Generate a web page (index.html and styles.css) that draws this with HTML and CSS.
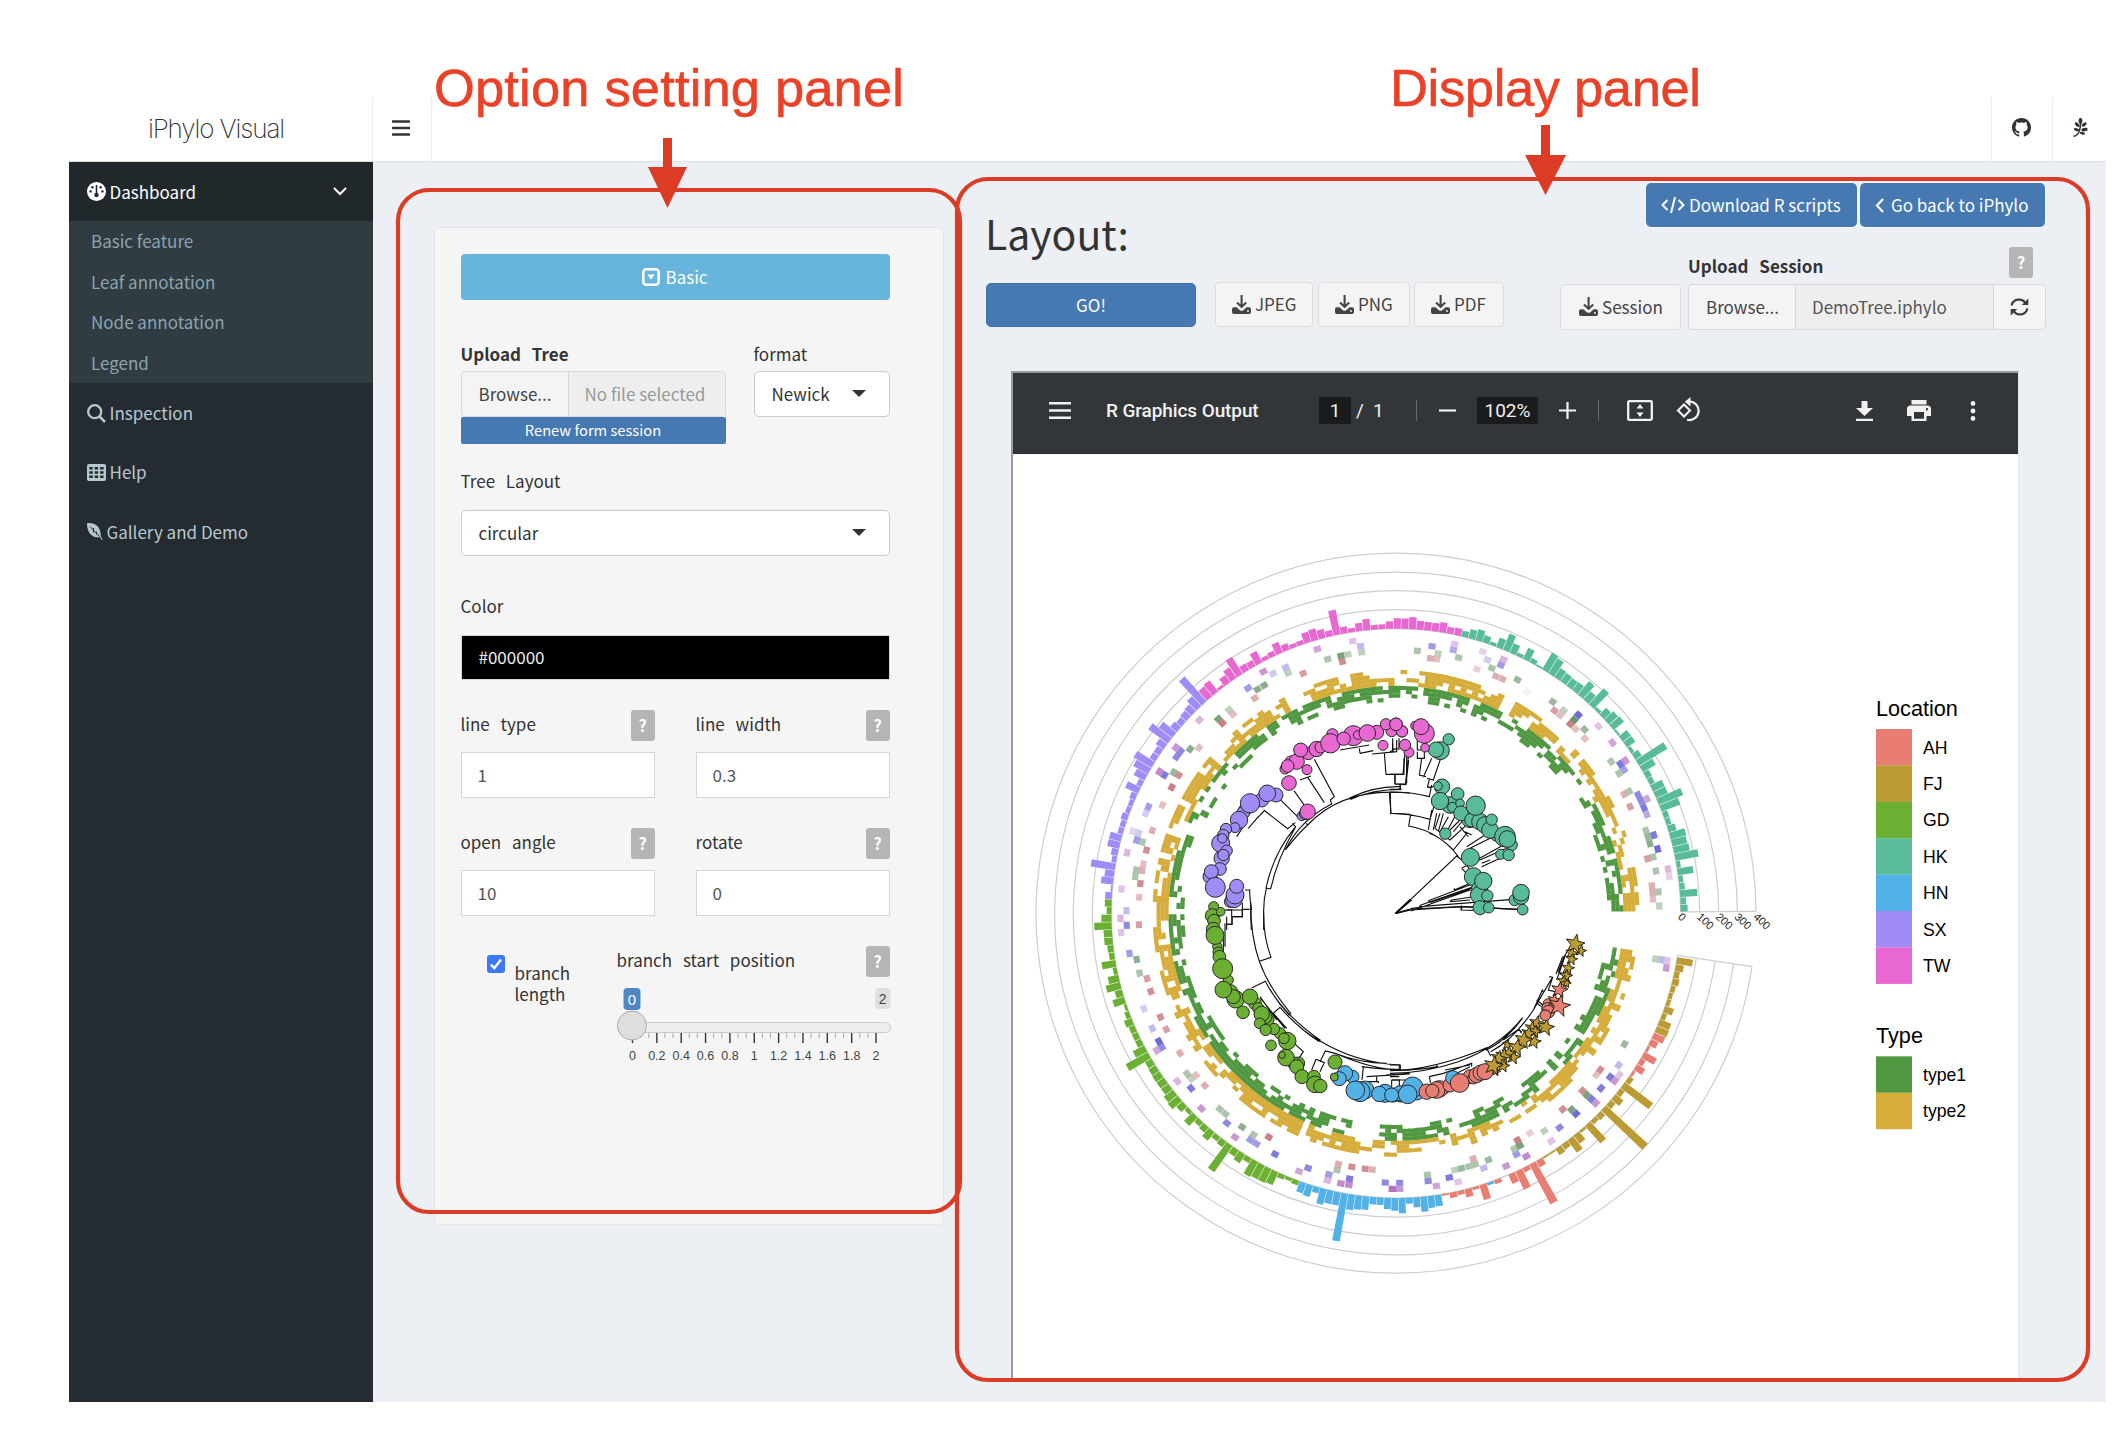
FILE: index.html
```html
<!DOCTYPE html>
<html lang="en">
<head>
<meta charset="utf-8">
<title>iPhylo Visual</title>
<link rel="stylesheet" href="styles.css">
</head>
<body>
<svg class="sprite" aria-hidden="true">
  <symbol id="i-download" viewBox="0 0 20 20"><path d="M9 0h2.200v10l3-2.900 1.500 1.500-5.600 5.300-5.600-5.300L6 7.100l3 2.900z"/><path d="M2 13h2.700l3.600 3c1 .9 2.600.9 3.600 0l3.600-3H18a2 2 0 0 1 2 2V18a2 2 0 0 1-2 2H2a2 2 0 0 1-2-2v-3a2 2 0 0 1 2-2zm14.800 2.800a1 1 0 1 0 0 2 1 1 0 0 0 0-2z"/></symbol>
</svg>

<div class="app">
  <header class="topbar">
    <div class="logo">iPhylo Visual</div>
    <button class="nav-toggle"><svg width="18" height="16" viewBox="0 0 18 16"><path d="M1 1.500h16M1 8h16M1 14.500h16" stroke="#333" stroke-width="2.600" stroke-linecap="round"/></svg></button>
    <div class="nav-links">
      <a class="nav-link github"><svg width="19" height="19" viewBox="0 0 16 16"><path fill="#2d3236" d="M8 0C3.580 0 0 3.580 0 8c0 3.540 2.290 6.530 5.470 7.590.4.070.55-.17.55-.38 0-.19-.01-.82-.01-1.490-2.010.37-2.530-.49-2.690-.94-.09-.23-.48-.94-.82-1.130-.28-.15-.68-.52-.01-.53.63-.01 1.080.58 1.230.82.72 1.210 1.870.87 2.330.66.07-.52.28-.87.51-1.070-1.780-.2-3.640-.89-3.640-3.950 0-.87.31-1.590.82-2.150-.08-.2-.36-1.020.08-2.120 0 0 .67-.21 2.200.82.64-.18 1.320-.27 2-.27s1.360.09 2 .27c1.530-1.040 2.200-.82 2.200-.82.44 1.100.16 1.920.08 2.120.51.56.82 1.270.82 2.150 0 3.070-1.870 3.750-3.650 3.950.29.25.54.73.54 1.480 0 1.070-.01 1.930-.01 2.200 0 .21.15.46.55.38A8 8 0 0 0 16 8c0-4.420-3.580-8-8-8z"/></svg></a>
      <a class="nav-link"><svg width="15" height="19" viewBox="0 0 15 19"><path d="M.5 18.300C4.500 18 7.500 13 7.800 3" stroke="#2d3236" stroke-width="1.500" fill="none"/><g fill="#2d3236"><ellipse cx="7.500" cy="2.800" rx="1.900" ry="2.900"/><ellipse cx="4.300" cy="6.700" rx="1.600" ry="2.900" transform="rotate(-50 4.300 6.700)"/><ellipse cx="11.200" cy="6.500" rx="1.600" ry="2.900" transform="rotate(50 11.200 6.500)"/><ellipse cx="3.500" cy="11.600" rx="1.500" ry="2.900" transform="rotate(-75 3.500 11.600)"/><ellipse cx="11.500" cy="11.600" rx="1.700" ry="3.200" transform="rotate(80 11.500 11.600)"/><ellipse cx="9.300" cy="15.300" rx="1.300" ry="2.800" transform="rotate(105 9.300 15.300)"/></g></svg></a>
    </div>
  </header>

  <div class="body">
    <nav class="sidebar">
      <a class="side-item active">
        <svg width="19" height="19" viewBox="0 0 19 19"><circle cx="9.500" cy="9.500" r="9.500" fill="#fff"/><path d="M9.500 3v9" stroke="#1e282c" stroke-width="1.600"/><g fill="#1e282c"><circle cx="9.500" cy="13" r="2.200"/><circle cx="5.400" cy="5.200" r="1.200"/><circle cx="13.600" cy="5.200" r="1.200"/><circle cx="3.600" cy="9.400" r="1.200"/><circle cx="15.400" cy="9.400" r="1.200"/></g></svg>
        <span>Dashboard</span>
        <svg class="chev" width="14" height="9" viewBox="0 0 14 9"><path d="M1 1l6 6 6-6" fill="none" stroke="#fff" stroke-width="2"/></svg>
      </a>
      <div class="submenu">
        <a>Basic feature</a><a>Leaf annotation</a><a>Node annotation</a><a>Legend</a>
      </div>
      <a class="side-item"><svg width="19" height="19" viewBox="0 0 19 19"><circle cx="7.700" cy="7.700" r="6.500" fill="none" stroke="#b8c7ce" stroke-width="2.300"/><path d="M12.500 12.500l5.500 5.500" stroke="#b8c7ce" stroke-width="2.500"/></svg><span>Inspection</span></a>
      <a class="side-item"><svg width="19" height="17" viewBox="0 0 19 17"><rect width="19" height="17" rx="2" fill="#b8c7ce"/><g fill="#222d32"><path d="M2.300 3h3.500v2.600H2.300zM7.700 3h3.500v2.600H7.700zM13.100 3h3.500v2.600h-3.500zM2.300 7.200h3.500v2.600H2.300zM7.700 7.200h3.500v2.600H7.700zM13.100 7.200h3.500v2.600h-3.500zM2.300 11.500h3.500v2.600H2.300zM7.700 11.500h3.500v2.600H7.700zM13.100 11.500h3.500v2.600h-3.500z"/></g></svg><span>Help</span></a>
      <a class="side-item gallery"><svg width="16" height="17" viewBox="0 0 16 17"><path d="M0 0c8-.3 14 3 13.700 13.500l2 3-.8.4-2-2.600C5 15 0 10 0 0z" fill="#b8c7ce"/><path d="M3 3.500l9.500 10M6.500 5v4.500M9.500 8.500v3" stroke="#222d32" stroke-width="1" fill="none"/></svg><span>Gallery and Demo</span></a>
    </nav>

    <main class="content">
      <section class="well">
        <button class="btn-basic"><svg width="18" height="18" viewBox="0 0 18 18"><rect x="1.300" y="1.300" width="15.400" height="15.400" rx="3" fill="none" stroke="#fff" stroke-width="2.500"/><path d="M5.300 6.500h7.400L9 11.800z" fill="#fff"/></svg>Basic</button>

        <div class="upload-row">
          <div class="upload">
            <label class="lbl bold">Upload Tree</label>
            <div class="file-group"><span class="browse">Browse...</span><span class="file-name muted">No file selected</span></div>
            <button class="btn-renew">Renew form session</button>
          </div>
          <div class="format">
            <label class="lbl">format</label>
            <div class="select">Newick<i class="caret"></i></div>
          </div>
        </div>

        <label class="lbl l-layout">Tree Layout</label>
        <div class="select s-layout">circular<i class="caret"></i></div>
        <label class="lbl l-color">Color</label>
        <div class="color-input">#000000</div>

        <div class="fields">
          <div class="field"><div class="field-head"><label class="lbl">line type</label><b class="help">?</b></div><div class="input">1</div></div>
          <div class="field"><div class="field-head"><label class="lbl">line width</label><b class="help">?</b></div><div class="input">0.3</div></div>
          <div class="field"><div class="field-head"><label class="lbl">open angle</label><b class="help">?</b></div><div class="input">10</div></div>
          <div class="field"><div class="field-head"><label class="lbl">rotate</label><b class="help">?</b></div><div class="input">0</div></div>
        </div>

        <div class="branch-row">
          <div class="check">
            <svg width="18" height="18" viewBox="0 0 18 18"><rect width="18" height="18" rx="3" fill="#3b78f5"/><path d="M3.800 9.500l3.500 3.700L14 4.500" fill="none" stroke="#fff" stroke-width="2.500"/></svg>
            <span>branch<br>length</span>
          </div>
          <div class="start">
            <div class="field-head"><label class="lbl">branch start position</label><b class="help">?</b></div>
            <svg id="slider" class="slider" width="274" height="76" viewBox="617 987 274 76"></svg>
          </div>
        </div>
      </section>

      <section class="display">
        <div class="display-top">
          <div class="top-left">
            <h2>Layout:</h2>
            <div class="export">
              <button class="btn-go">GO!</button>
              <button class="btn jpeg"><svg class="dl"><use href="#i-download"/></svg>JPEG</button>
              <button class="btn png"><svg class="dl"><use href="#i-download"/></svg>PNG</button>
              <button class="btn pdfb"><svg class="dl"><use href="#i-download"/></svg>PDF</button>
            </div>
          </div>
          <div class="top-right">
            <div class="links">
              <button class="btn-blue scripts"><svg width="24" height="18" viewBox="0 0 24 18"><path d="M6.500 4L1.500 9l5 5M17.500 4l5 5-5 5M14 1L10 17" fill="none" stroke="#fff" stroke-width="2"/></svg>Download R scripts</button>
              <button class="btn-blue back"><svg width="9" height="15" viewBox="0 0 9 15"><path d="M8 1L2 7.500 8 14" fill="none" stroke="#fff" stroke-width="2.200"/></svg>Go back to iPhylo</button>
            </div>
            <div class="session-head"><label class="lbl bold">Upload Session</label><b class="help">?</b></div>
            <div class="session">
              <button class="btn sess"><svg class="dl"><use href="#i-download"/></svg>Session</button>
              <div class="file-group"><span class="browse">Browse...</span><span class="file-name">DemoTree.iphylo</span><span class="refresh"><svg width="19" height="18" viewBox="0 0 19 18"><g fill="none" stroke="#3c3c3c" stroke-width="2.200"><path d="M1.600 7.500A7.600 7.600 0 0 1 15.500 5.200"/><path d="M17.400 10.500A7.600 7.600 0 0 1 3.500 12.800"/></g><path d="M18.300.5v6.500h-6.500zM.7 17.500v-6.500h6.500z" fill="#3c3c3c"/></svg></span></div>
            </div>
          </div>
        </div>

        <div class="viewer">
          <div class="toolbar">
            <svg class="t-menu" width="22" height="17" viewBox="0 0 22 17"><path d="M0 1.200h22M0 8.500h22M0 15.800h22" stroke="#f1f1f1" stroke-width="2.400"/></svg>
            <b class="t-title">R Graphics Output</b>
            <span class="t-box t-page">1</span><span class="t-slash">/</span><span class="t-total">1</span>
            <i class="t-sep"></i>
            <svg class="t-minus" width="17" height="17" viewBox="0 0 17 17"><path d="M0 8.500h17" stroke="#f1f1f1" stroke-width="2.200"/></svg>
            <span class="t-box t-zoom">102%</span>
            <svg class="t-plus" width="17" height="17" viewBox="0 0 17 17"><path d="M0 8.500h17M8.500 0v17" stroke="#f1f1f1" stroke-width="2.200"/></svg>
            <i class="t-sep s2"></i>
            <svg class="t-fit" width="26" height="21" viewBox="0 0 26 21"><rect x="1.200" y="1.200" width="23.600" height="18.600" rx="1" fill="none" stroke="#f1f1f1" stroke-width="2.300"/><path d="M13 4l3.500 4.500h-7zM13 17l3.500-4.500h-7z" fill="#f1f1f1"/></svg>
            <svg class="t-rot" width="25" height="25" viewBox="0 0 25 25"><path d="M8 7.500l6 6-6 6-6-6z" fill="none" stroke="#f1f1f1" stroke-width="2.100"/><path d="M13 4.500a9.300 9.300 0 1 1-2 18.300" fill="none" stroke="#f1f1f1" stroke-width="2.200"/><path d="M14.500 0v9.500L8.800 4.700z" fill="#f1f1f1"/></svg>
            <svg class="t-dl" width="17" height="20" viewBox="0 0 17 20"><path d="M5.500 0h6v7H17l-8.500 8L0 7h5.500zM0 17.700h17V20H0z" fill="#f1f1f1"/></svg>
            <svg class="t-print" width="24" height="21" viewBox="0 0 24 21"><path d="M4.500 0h15v4.500h-15zM3.500 5.500h17A3.500 3.500 0 0 1 24 9v7h-4.500v5h-15v-5H0V9a3.500 3.500 0 0 1 3.500-3.500zM7 12v6.800h10V12zm13-4a1.200 1.200 0 1 0 0 2.400A1.200 1.200 0 0 0 20 8z" fill="#f1f1f1" fill-rule="evenodd"/></svg>
            <svg class="t-dots" width="6" height="20" viewBox="0 0 6 20"><g fill="#f1f1f1"><circle cx="3" cy="2.500" r="2.400"/><circle cx="3" cy="10" r="2.400"/><circle cx="3" cy="17.500" r="2.400"/></g></svg>
          </div>
          <div class="page">
            <svg id="tree" width="1005" height="924" viewBox="9 -228 3015 2772"></svg>
          </div>
        </div>
      </section>
    </main>
  </div>
</div>

<svg class="callouts" width="2120" height="1456" viewBox="0 0 2120 1456">
  <g fill="none" stroke="#dc3b26" stroke-width="4.200"><rect x="398" y="190" width="562" height="1022" rx="31"/><rect x="957" y="179" width="1131" height="1201" rx="31"/></g>
  <path d="M663 138h9v29h15l-19.500 41L648 167h15zM1541 125h9v30h16l-20.500 40L1525 155h16z" fill="#dc3b26"/>
  <g class="callout-text"><text x="434" y="106" textLength="470">Option setting panel</text><text x="1390" y="106" textLength="311">Display panel</text></g>
</svg>
<script src="chart.js"></script>
</body>
</html>
```
FILE: styles.css
```css
* { box-sizing: border-box; }
body {
  margin: 0;
  width: 2120px;
  height: 1456px;
  overflow: hidden;
  background: #fff;
  color: #333;
  font: 17px/24px "Noto Sans CJK SC", "Open Sans", sans-serif;
}
button { font: inherit; color: inherit; margin: 0; padding: 0; border: 0; background: none; }
svg { display: block; flex: none; }
.sprite { position: absolute; width: 0; height: 0; }

.app { width: 2037px; margin: 97px 0 0 69px; height: 1305px; }

.topbar { display: flex; height: 65px; border-bottom: 1px solid #dfe3e8; }
.logo {
  width: 304px; padding: 1px 9px 0 0; text-align: center;
  font: 200 26px/62px Inter, "Liberation Sans", sans-serif;
  letter-spacing: -1.100px; border-right: 1px solid #eee;
}
.nav-toggle { display: flex; align-items: flex-start; width: 59px; padding: 23px 0 0 19px; border-right: 1px solid #eee; }
.nav-links { margin-left: auto; display: flex; }
.nav-link { width: 54px; border-left: 1px solid #eee; padding: 21px 0 0 20px; }
.nav-link.github { width: 61px; }

.body { display: flex; height: 1240px; }
.sidebar { width: 304px; background: #242c32; color: #b8c7ce; }
.side-item { display: flex; align-items: center; height: 59.400px; padding: 0 26px 0 17.500px; gap: 4px; }
.side-item.active { background: #20282b; color: #fff; }
.chev { margin-left: auto; }
.submenu { background: #303b42; color: #8aa4af; padding: 0 0 0 22px; height: 162px; }
.submenu a { display: block; height: 40.400px; line-height: 40px; }

.content { flex: 1; display: flex; background: #ecf0f5; }
.well {
  width: 510px; height: 998px; margin: 65px 0 0 61px; padding: 26px 51px 0 25px;
  background: #f5f5f5; border: 1px solid #e3e5e8; border-radius: 5px;
}
.btn-basic {
  display: flex; justify-content: center; align-items: center; gap: 5px;
  width: 429px; height: 46px; border-radius: 4px; background: #67b4dc; color: #fff;
}
.well > * { position: static; margin-left: .5px; }
.lbl { display: block; word-spacing: 7px; white-space: nowrap; }
.bold { font-weight: 700; }
.upload-row { display: flex; justify-content: space-between; width: 429px; margin-top: 42px; }
.upload { width: 265px; }
.format { width: 136px; }
.upload .lbl, .format .lbl { height: 29px; }
.file-group { display: flex; height: 46px; line-height: 43px; border: 1px solid #d6d9e0; border-radius: 4px; color: #444; background: #f4f4f4; }
.browse { width: 106px; padding-left: 17px; }
.file-name { flex: 1; padding-left: 16px; background: #eee; border-left: 1px solid #d2d6de; color: #555; }
.muted { color: #999; }
.btn-renew { display: block; width: 265px; height: 27px; background: #4678b2; color: #fff; font-size: 14.700px; line-height: 24px; padding-bottom: 2px; border-radius: 2px; }
.select {
  display: flex; align-items: center; justify-content: space-between;
  height: 46px; padding: 0 23px 1px 17px; background: #fff; border: 1px solid #ccc; border-radius: 5px;
}
.caret { border: 7px solid transparent; border-top-color: #333; border-bottom: 0; margin-top: -1px; }
.l-layout { margin-top: 25px; }
.s-layout { margin-top: 17px; }
.l-color { margin-top: 38px; }
.s-layout, .color-input { width: 429px; }
.color-input { margin-top: 17px; height: 45px; padding-left: 17px; line-height: 42px; background: #000; color: #eee; border: 1px solid #d2d6de; }
.fields { display: grid; grid-template-columns: 194px 194px; column-gap: 41px; row-gap: 30px; margin-top: 30px; width: 429px; }
.field-head { display: flex; justify-content: space-between; height: 31px; }
.field-head .lbl { padding-top: 2px; }
.help { width: 24px; height: 31px; border-radius: 3px; background: #b5b5b5; color: #fff; text-align: center; line-height: 30px; font-size: 16px; }
.input { height: 46px; margin-top: 11px; padding-left: 16px; line-height: 43px; background: #fff; border: 1px solid #d2d6de; color: #555; }
.branch-row { display: flex; justify-content: space-between; width: 429px; margin-top: 30px; }
.check { display: flex; gap: 10px; padding: 9px 0 0 26px; }
.check span { line-height: 21px; padding-top: 7px; }
.start { width: 273px; }
.slider { margin-top: 10px; font: 12.500px "Liberation Sans", sans-serif; overflow: visible; }

.display { width: 1059px; margin-left: 42px; }
.display-top { display: flex; justify-content: space-between; height: 208px; }
h2 { margin: 43px 0 0 -1px; font-size: 41px; font-weight: 400; line-height: 54px; height: 77px; }
.export { display: flex; align-items: center; height: 45px; }
.btn-go { width: 210px; height: 44px; border-radius: 5px; background: #4678b2; border: 1px solid #3f6ea6; color: #fff; line-height: 40px; margin-right: 19px; }
.btn { display: flex; align-items: center; height: 45px; padding: 0 0 1px 16px; gap: 4px; background: #f4f4f4; border: 1px solid #ddd; border-radius: 4px; color: #444; }
.dl { width: 19px; height: 19px; fill: #444; }
.jpeg { width: 98px; margin-right: 5px; }
.png { width: 92px; margin-right: 4px; }
.pdfb { width: 90px; }
.links { display: flex; justify-content: flex-end; gap: 3px; margin-top: 21px; }
.btn-blue { display: flex; align-items: center; height: 44px; padding-left: 15px; background: #4678b2; color: #fff; border-radius: 5px; box-shadow: 0 0 0 1px #f4f7fb; }
.scripts { width: 211px; gap: 4px; }
.back { width: 185px; gap: 7px; }
.session-head { display: flex; justify-content: space-between; height: 31px; margin: 20px 12px 0 129px; }
.session-head .lbl { padding-top: 7px; }
.session { display: flex; margin: 6px -1px 0 1px; gap: 7px; }
.sess { width: 121px; height: 46px; padding-left: 18px; }
.session .file-group { width: 358px; }
.session .file-name { flex: none; width: 198px; }
.refresh { flex: 1; border-left: 1px solid #d2d6de; padding: 13px 0 0 16px; }

.viewer { width: 1008px; height: 1008px; margin-left: 25px; border: 2px solid #999b9d; border-right: 1px solid #e4e6e8; border-bottom: 0; margin-top: 1px; }
.toolbar { display: flex; align-items: center; height: 81px; padding-bottom: 5px; background: #323639; color: #f1f1f1; font: 500 19px/27px Roboto, sans-serif; border-bottom: 1px solid #27292b; }
.t-menu { margin-left: 36px; }
.t-title { margin-left: 35px; width: 213px; font-weight: 500; letter-spacing: -.1px; white-space: nowrap; }
.t-box { height: 27px; background: #191b1c; text-align: center; font-weight: 400; }
.t-page { width: 32px; }
.t-slash { width: 22px; padding-left: 5px; font-weight: 400; }
.t-total { width: 43px; font-weight: 400; }
.t-sep { width: 1px; height: 21px; background: #66696b; }
.t-minus { margin-left: 22px; }
.t-zoom { width: 61px; margin-left: 21px; }
.t-plus { margin-left: 21px; }
.s2 { margin-left: 22px; }
.t-fit { margin-left: 28px; }
.t-rot { margin-left: 23px; margin-top: -2px; }
.t-dl { margin-left: 155px; }
.t-print { margin-left: 34px; }
.t-dots { margin-left: 39px; }
.page { background: #fff; height: 925px; font-family: "Liberation Sans", sans-serif; }

.callouts { position: absolute; left: 0; top: 0; pointer-events: none; }
.callout-text { font: 52.500px "Liberation Sans", sans-serif; fill: #eb4127; stroke: #eb4127; stroke-width: .6px; }
```
FILE: chart.js
```js
const NS = 'http://www.w3.org/2000/svg';
function add(parent, tag, attrs, text) {
  const e = document.createElementNS(NS, tag);
  for (const k in attrs) e.setAttribute(k, attrs[k]);
  if (text !== undefined) e.textContent = text;
  parent.appendChild(e);
  return e;
}

/* ---------- slider ---------- */
const sl = document.getElementById('slider');
add(sl, 'rect', { x: 617.5, y: 1022.5, width: 273, height: 10, rx: 5, fill: '#eee', stroke: '#ccc' });
for (let i = 0; i <= 30; i++) {
  const x = 632.5 + i * 8.117, major = i % 3 === 0;
  add(sl, 'path', { d: `M${x} 1033v${major ? 10 : 5}`, stroke: major ? '#333' : '#aaa', 'stroke-width': major ? 1.4 : 1 });
  if (major) add(sl, 'text', { x, y: 1060, 'text-anchor': 'middle', fill: '#444' }, String(+(i / 15).toFixed(1)));
}
add(sl, 'circle', { cx: 632, cy: 1025.500, r: 14.500, fill: '#dedede', stroke: '#ababab' });
add(sl, 'rect', { x: 623.500, y: 988, width: 17, height: 22, rx: 4, fill: '#4f87c6' });
add(sl, 'text', { x: 632, y: 1005, 'text-anchor': 'middle', fill: '#fff', 'font-size': 15 }, '0');
add(sl, 'rect', { x: 875, y: 988, width: 15.500, height: 21, rx: 4, fill: '#dfdfdf' });
add(sl, 'text', { x: 882.700, y: 1004, 'text-anchor': 'middle', fill: '#444', 'font-size': 14 }, '2');

/* ---------- circular tree ---------- */
const tree = document.getElementById('tree');
const CX = 1158, CY = 1150;
const C = { AH: '#e87e72', FJ: '#bb9b33', GD: '#6cb033', HK: '#58bc98', HN: '#52b1e6', SX: '#a18bf7', TW: '#e868d2', t1: '#519843', t2: '#d6ad3b' };
const pt = (r, deg) => {
  const a = deg * Math.PI / 180;
  return [(CX + r * Math.cos(a)).toFixed(1), (CY - r * Math.sin(a)).toFixed(1)];
};
const cell = (r0, r1, a0, a1) => 'M' + [pt(r0, a0), pt(r1, a0), pt(r1, a1), pt(r0, a1)].join('L') + 'Z';

/* value axis rings */
const END = 351.500, RINGS = [854, 911, 968, 1024, 1080];
const axis = add(tree, 'g', { fill: 'none', stroke: '#cdcdcd', 'stroke-width': 3.6 });
RINGS.forEach(r => add(axis, 'path', { d: `M${pt(r, .3)}A${r} ${r} 0 1 0 ${pt(r, END)}` }));
add(axis, 'path', { d: `M${pt(854, .3)}L${pt(1080, .3)}M${pt(854, END)}L${pt(1080, END)}` });
['0', '100', '200', '300', '400'].forEach((t, i) => {
  const x = 2002 + i * 56.5, y = 1163;
  add(tree, 'text', { x, y, transform: `rotate(43 ${x} ${y})`, 'font-size': 33, fill: '#222' }, t);
});

/* bars: location, start angle, end angle, lengths */
const BARS = [
  ['HK', .3, 76.8, [21,17,52,16,13,47,12,70,48,45,48,24,15,16,60,78,38,38,16,18,44,98,22,10,30,30,6,40,36,28,10,65,32,52,30,28,30,32,52,58,5,14,36,10,30,52,30,10,22,34,28,18]],
  ['TW', 76.8, 131.7, [22,20,30,25,25,26,36,31,31,22,14,14,33,24,12,20,75,18,27,35,32,13,12,20,34,16,12,38,20,22,60,38,26,8,42,38]],
  ['SX', 131.7, 177.2, [99,40,28,24,20,25,50,72,28,20,20,62,50,36,16,42,18,14,14,20,16,16,36,36,20,14,73,28,36,5,20]],
  ['GD', 177.2, 250.2, [20,14,30,52,25,25,18,16,42,12,32,44,22,36,8,14,24,18,18,18,38,75,22,24,26,26,26,34,38,24,12,36,16,20,32,16,20,95,22,30,16,50,46,46,42,14,10,14]],
  ['HN', 250.2, 279.2, [32,36,18,48,40,40,145,46,42,40,22,22,34,38,46,18,30,45,36,34]],
  ['AH', 279.2, 301, [5,16,12,24,8,46,-8,12,0,30,60,14,135,22]],
  ['FJ', 301, 325.15, [5,5,22,18,46,30,8,70,14,18,170,18,30,16,105,16]],
  ['AH', 325.15, 335.3, [8,28,16,42,8,24,36]],
  ['FJ', 335.3, 351.2, [38,36,14,28,12,12,14,20,16,24,48]]
];
BARS.forEach(([loc, a, b, v]) => {
  const p = (b - a) / v.length;
  v.forEach((h, i) => {
    if (!h) return;
    const s = a + i * p;
    add(tree, 'path', { d: cell(854, 854 + Math.abs(h), s + p * .03, s + p * .96), fill: h < 0 ? C.HN : C[loc] });
  });
});

/* presence / absence rings */
let seed = 48271;
const rnd = () => (seed = (seed * 16807) % 2147483647) / 2147483647;
const N = 234, P = 350.6 / N;
const FILL = [.4, .52, .62, .6, .55, .62, .56, .42];
const D = FILL.map(() => '');
const prev = FILL.map(() => false);
for (let i = 0; i < N; i++) {
  FILL.forEach((f, row) => {
    const u = rnd();
    const on = u < .2 ? prev[row] : u < .38 && row % 4 ? prev[row - 1] : rnd() < f;
    prev[row] = on;
    const r = 635 + row * 11.9;
    if (on) D[row] += cell(r - .3, r + 12.2, .5 + i * P - .04, .5 + (i + 1) * P + .04);
  });
}
D.forEach((d, row) => add(tree, 'path', { d, fill: row < 4 ? C.t1 : C.t2 }));

/* heat tiles, listed per quadrant: x, y, strength */
const Q = [[0, 0], [1140, 0], [0, 1110], [1140, 1110]];
const TILES = {
  P: ['#b36cbf', 827, [
    [1028,333,4,922,357,6,760,424,7,568,570,5,497,652,7,448,725,8,370,904,3,351,968,5,335,1077,4,331,1165,5],
    [194,342,4,278,365,3,341,389,5,624,590,4,666,639,6,705,693,7,768,808,6,831,1018,5,835,1040,3],
    [333,98,4,441,451,6,503,543,5,575,625,7,676,710,7,868,812,6,953,838,5,993,849,8,1017,853,8,1147,864,8,1169,864,7],
    [829,182,4,825,203,7,684,522,4,671,540,7,614,606,7,482,720,4,407,765,8,347,795,7,204,842,4,139,855,6,8,864,8]]],
  B: ['#5f5bd2', 808.5, [
    [1052,350,4,827,412,4,789,430,3,714,474,6,510,662,7,502,682,7,463,735,8,415,830,6,407,850,3,386,910,3,380,930,6,351,1142,4,351,1186,7],
    [126,349,6,190,360,5,292,391,3,333,405,6,563,557,9,690,703,8,699,721,6,742,796,7,750,815,7,759,835,8,767,855,5,787,917,8,799,958,9],
    [360,160,6,402,326,3,428,385,4,447,424,9,458,440,7,544,564,8,652,668,7,722,718,6,740,730,6,796,761,8,895,802,7,957,821,6,1019,834,8,1126,845,7,1169,845,7],
    [811,179,4,682,493,4,658,529,8,630,562,8,602,595,8,555,638,9,506,679,7,377,758,6,280,800,4,177,829,8,114,839,7]]],
  G: ['#5c8a5c', 790, [
    [1055,367,4,953,387,5,993,379,8,1014,374,4,835,430,4,763,467,7,743,479,7,658,540,4,626,568,8,540,657,7,491,727,6,398,936,5,380,1020,5,376,1040,5],
    [82,363,5,144,371,4,206,383,5,305,415,5,382,450,6,487,517,6,519,544,4,552,570,9,582,600,6,661,697,5,684,732,5,714,786,5,764,903,5,770,922,6,776,942,7,786,982,5,793,1024,5,801,1086,5,804,1128,4],
    [381,178,7,390,219,5,533,520,5,545,535,4,630,626,5,648,640,5,698,679,7,732,703,5,982,806,5],
    [791,176,4,700,430,6,588,583,8,543,627,8,460,689,4,388,733,8,371,742,5,294,776,6,255,790,5,235,796,5,213,801,6,193,806,4,112,821,5]]],
  R: ['#bd5f62', 772, [
    [997,395,7,880,431,6,735,505,5,669,553,4,638,580,8,568,654,4,508,737,7,486,772,8,459,826,4,429,902,5,411,961,7,402,1002,4,399,1022,5,393,1061,7,390,1102,4,388,1184,6],
    [121,387,5,140,389,4,260,419,3,317,440,5,337,449,5,409,487,1,491,545,6,510,556,4,540,583,8,555,598,4,582,628,4,700,794,5,716,832,6,768,987,6,781,1068,5,782,1088,5,784,1108,4],
    [414,235,6,424,274,7,454,350,7,471,387,6,512,458,5,560,524,4,587,555,5,778,708,8,986,789,5,1026,797,7,1066,803,7,1087,805,5],
    [627,506,7,615,521,4,574,569,7,515,624,7,417,695,3,380,716,8,248,772,5]]]
};
for (const k in TILES) {
  const [fill, r, quads] = TILES[k];
  quads.forEach((q, qi) => {
    for (let i = 0; i < q.length; i += 3) {
      const a = Math.atan2(CY - q[i + 1] - Q[qi][1], q[i] + Q[qi][0] - CX) * 180 / Math.PI;
      add(tree, 'path', { d: cell(r - 9.3, r + 9.3, a - .76, a + .76), fill, opacity: q[i + 2] / 10 });
    }
  });
}

/* branches, one group per quadrant */
const LINES = [
  `M1175 778Q1085 778 1023 808L1020 803Q1095 768 1171 770M1171 778V764M1138 787L1143 850 1200 853M1200 789Q1000 770 893 885L888 880M893 885Q865 910 826 960M782 1077L768 1074Q790 970 857 890L847 880M782 1077Q800 990 857 890M826 960Q870 870 965 822L961 810 973 800 913 688M943 818L893 742M870 750L903 738M852 782L893 840M810 808L868 865M765 843L833 896 856 878M738 868L765 840M715 895L745 860M680 920L700 890M1123 668L1128 733H1179L1185 670M1155 733V762L1188 764 1196 690M1086 672L1160 665V630M1050 670L1090 662M1048 655L1050 670M990 660L1078 645M1148 625V665M1190 640V760M725 1140Q720 1118 719 1080H705M719 1138H697V1160H666V1183H650M650 1140H697M665 1138V1160M761 1150Q760 1110 769 1076M724 1200Q722 1160 722 1118M1155 1150L1200 1108M1155 1150L1200 1138M761 1150V1200M650 1160V1200`,
  `M18 1150L200 978Q235 1000 262 1060M18 1150L62 1137 215 1130 398 1139M62 1143L240 1080M88 1130L93 1125 280 1060M88 1130L370 1108M115 1112L265 1055M115 1112L122 1117 260 1070M180 1115L185 1110 285 1095M193 1080L240 1060M193 1075V1082M213 1135V1140L280 1142M1 787Q60 785 118 800L125 765M1 787L2 850Q60 850 120 868L150 770M62 853L56 888Q150 905 205 980M118 910Q150 920 190 960L232 908M135 895L150 850M135 895L180 930 235 880M150 905L175 860M165 915L200 850M180 900L210 870M190 905L220 870M108 740L88 735 95 685M100 742L125 685M112 745L130 750 152 685M112 772L130 770M112 772L118 750M0 778H30V762M15 762V733M46 765L55 680M0 733H42V685M15 762H46M82 665V685H103V660H82V610M8 640V657H27V625M0 665L20 655M230 950L300 905M240 955L320 915M215 1015L350 940M275 1010L330 985M235 1005L350 955M215 1015L250 1050M275 1000L300 990M125 840L115 900M140 850L130 900M160 850L145 905M225 905L245 915M210 890L235 920`,
  `M761 40Q760 110 783 172L748 184Q722 110 722 8M697 8V50H666V73H650M748 184Q775 260 842 340L838 345Q795 300 766 244L725 264M766 244Q815 340 930 420L926 424Q860 380 810 322L790 340 830 385M750 290L800 360M752 295L825 385M810 322Q870 390 925 420Q1040 490 1171 495V510Q1090 510 975 460L946 453 930 485M975 460Q1050 490 1130 490M918 478L943 488 930 515M905 510L918 478M830 410L880 455 865 478M1055 500Q1110 508 1200 510M1060 502L1056 540M1070 530L1200 522M1075 545H1105V550M1145 540V560M1145 540H1200M1128 525L1200 520M1100 530V545M645 70V140M640 100V180M640 30H666M1158 40L1200 0`,
  `M0 495H28V511Q90 510 142 500L140 495M0 520Q100 520 205 485Q330 440 398 353M0 512Q130 510 290 443L290 450Q350 420 397 355M290 445L302 468M302 455Q370 420 430 330L457 270 460 275M440 310L455 320M430 330Q470 260 488 232L478 230M440 300L458 315M488 232L475 270 495 275M524 165L505 215 515 225M530 155L500 240M518 170L498 222M385 385L395 400M340 420L385 388 395 395M325 430Q360 400 398 353M118 530L160 520 245 490V500M118 530L122 550M5 540H28V560M0 530H28M165 510L240 495M200 520L240 500M18 40L62 30 215 20 398 29M92 18L88 22 62 26M18 40L65 0M215 30L214 16M180 5L240 0`
];
LINES.forEach((d, i) => add(tree, 'path', { d, transform: `translate(${Q[i]})`, fill: 'none', stroke: '#111', 'stroke-width': 3.4 }));

/* tip points: quadrant, location, x, y, r triples */
const TIPS = [
  [0,'SX',[875,858,15,885,852,18,798,795,22,755,810,22,772,790,26,705,840,20,700,848,20,720,820,30,687,870,27,675,893,16,648,897,18,640,915,18,632,940,28,637,925,15,650,962,18,635,985,24,640,975,18,630,1017,20,600,1040,22,604,1025,22,616,1072,31,660,1115,18,672,1108,26,675,1095,28,680,1069,22]],
  [0,'TW',[1145,603,18,1128,583,18,1176,604,18,1158,583,20,1119,646,16,1184,646,16,1100,607,22,967,613,18,1030,617,31,1043,615,14,1072,609,26,895,670,20,920,657,24,932,652,18,961,640,30,1001,626,21,842,695,18,860,695,24,872,660,22,825,717,16,833,708,20,891,719,16,837,759,23,893,845,24]],
  [2,'GD',[611,20,16,607,47,22,632,35,14,612,62,20,610,88,22,622,140,15,615,106,28,625,157,17,628,170,20,655,240,16,638,206,31,662,275,22,677,298,27,670,290,22,640,269,26,699,337,20,735,310,20,745,325,18,720,290,24,775,360,18,765,350,22,755,342,24,749,370,17,810,400,18,792,387,18,767,390,18,832,423,27,822,415,17,783,436,17,865,490,20,852,490,20,828,473,26,816,465,11,860,500,22,876,530,22,912,530,20,915,553,26,931,558,21]],
  [2,'HN',[1028,530,20,1005,520,24,988,536,22,1065,570,28,1050,575,31,1036,571,29,1172,585,22,1150,585,22,1125,580,28,1108,582,24,1170,583,22]],
  [2,'GD',[975,486,22,973,531,13]],
  [3,'HN',[30,580,24,5,585,22,80,575,26,68,562,32,53,583,29]],
  [3,'AH',[110,575,24,160,565,20,148,567,26,140,570,26,127,573,21,180,555,22]],
  [3,'HN',[188,533,22]],
  [3,'AH',[240,530,22,250,535,18,260,525,24,272,518,24,285,515,25,209,549,29,475,312,17,472,325,18,475,335,20,466,346,17]],
  [1,'HK',[151,662,28,138,659,24,176,628,18,156,770,24,144,768,14,180,825,26,188,832,16,150,813,27,203,792,20,210,820,14,240,868,26,213,850,23,245,870,22,270,875,26,257,827,30,285,885,26,320,915,20,300,900,26,305,869,18,365,945,18,345,920,32,352,927,26,332,973,16,356,975,18,166,911,18,241,982,28,250,1040,28,268,1080,26,266,1095,26,280,1053,27,270,1133,22,292,1097,18,296,1133,17,374,1110,18,393,1100,24,393,1088,26,398,1139,17]],
  [1,'TW',[36,604,18,18,583,20,57,667,16,45,645,18,75,587,14,103,610,31,93,590,25,105,653,14]]
];
TIPS.forEach(([q, loc, v]) => {
  for (let i = 0; i < v.length; i += 3)
    add(tree, 'circle', { cx: v[i] + Q[q][0], cy: v[i + 1] + Q[q][1], r: v[i + 2] - 1, fill: C[loc], stroke: '#2a2a2a', 'stroke-width': 3 });
});
const STARS = [
  ['FJ',[545,160,20,572,153,18,545,178,18,555,132,30,534,205,20,528,228,20,520,245,20,530,250,14]],
  ['AH',[508,270,26,492,300,20,508,318,34]],
  ['FJ',[440,370,24,425,385,22,467,382,27,435,395,20,432,425,22,415,400,22,400,420,28,352,435,16,380,443,27,370,472,22,355,460,22,340,470,26,325,475,24,340,498,20,318,515,14,310,497,30]]
];
STARS.forEach(([loc, v]) => {
  for (let i = 0; i < v.length; i += 3) {
    const p = [];
    for (let k = 0; k < 10; k++) {
      const r = k % 2 ? v[i + 2] * .42 : v[i + 2], a = (k * 36 - 78) * Math.PI / 180;
      p.push((v[i] + Q[3][0] + r * Math.cos(a)).toFixed(1) + ',' + (v[i + 1] + Q[3][1] + r * Math.sin(a)).toFixed(1));
    }
    add(tree, 'polygon', { points: p.join(' '), fill: C[loc], stroke: '#2a2410', 'stroke-width': 3 });
  }
});
/* the last AH tip sits above the stars */
add(tree, 'circle', { cx: 1606, cy: 1456, r: 16, fill: C.AH, stroke: '#2a2a2a', 'stroke-width': 3 });

/* legends */
function legend(title, ty, y0, items) {
  add(tree, 'text', { x: 2598, y: ty, 'font-size': 65, fill: '#000' }, title);
  items.forEach(([name, fill], i) => {
    add(tree, 'rect', { x: 2598, y: y0 + i * 109.2, width: 108, height: 109.5, fill });
    add(tree, 'text', { x: 2739, y: y0 + i * 109.2 + 74, 'font-size': 53, fill: '#000' }, name);
  });
}
legend('Location', 558, 597, ['AH', 'FJ', 'GD', 'HK', 'HN', 'SX', 'TW'].map(k => [k, C[k]]));
legend('Type', 1539, 1579, [['type1', C.t1], ['type2', C.t2]]);
```
